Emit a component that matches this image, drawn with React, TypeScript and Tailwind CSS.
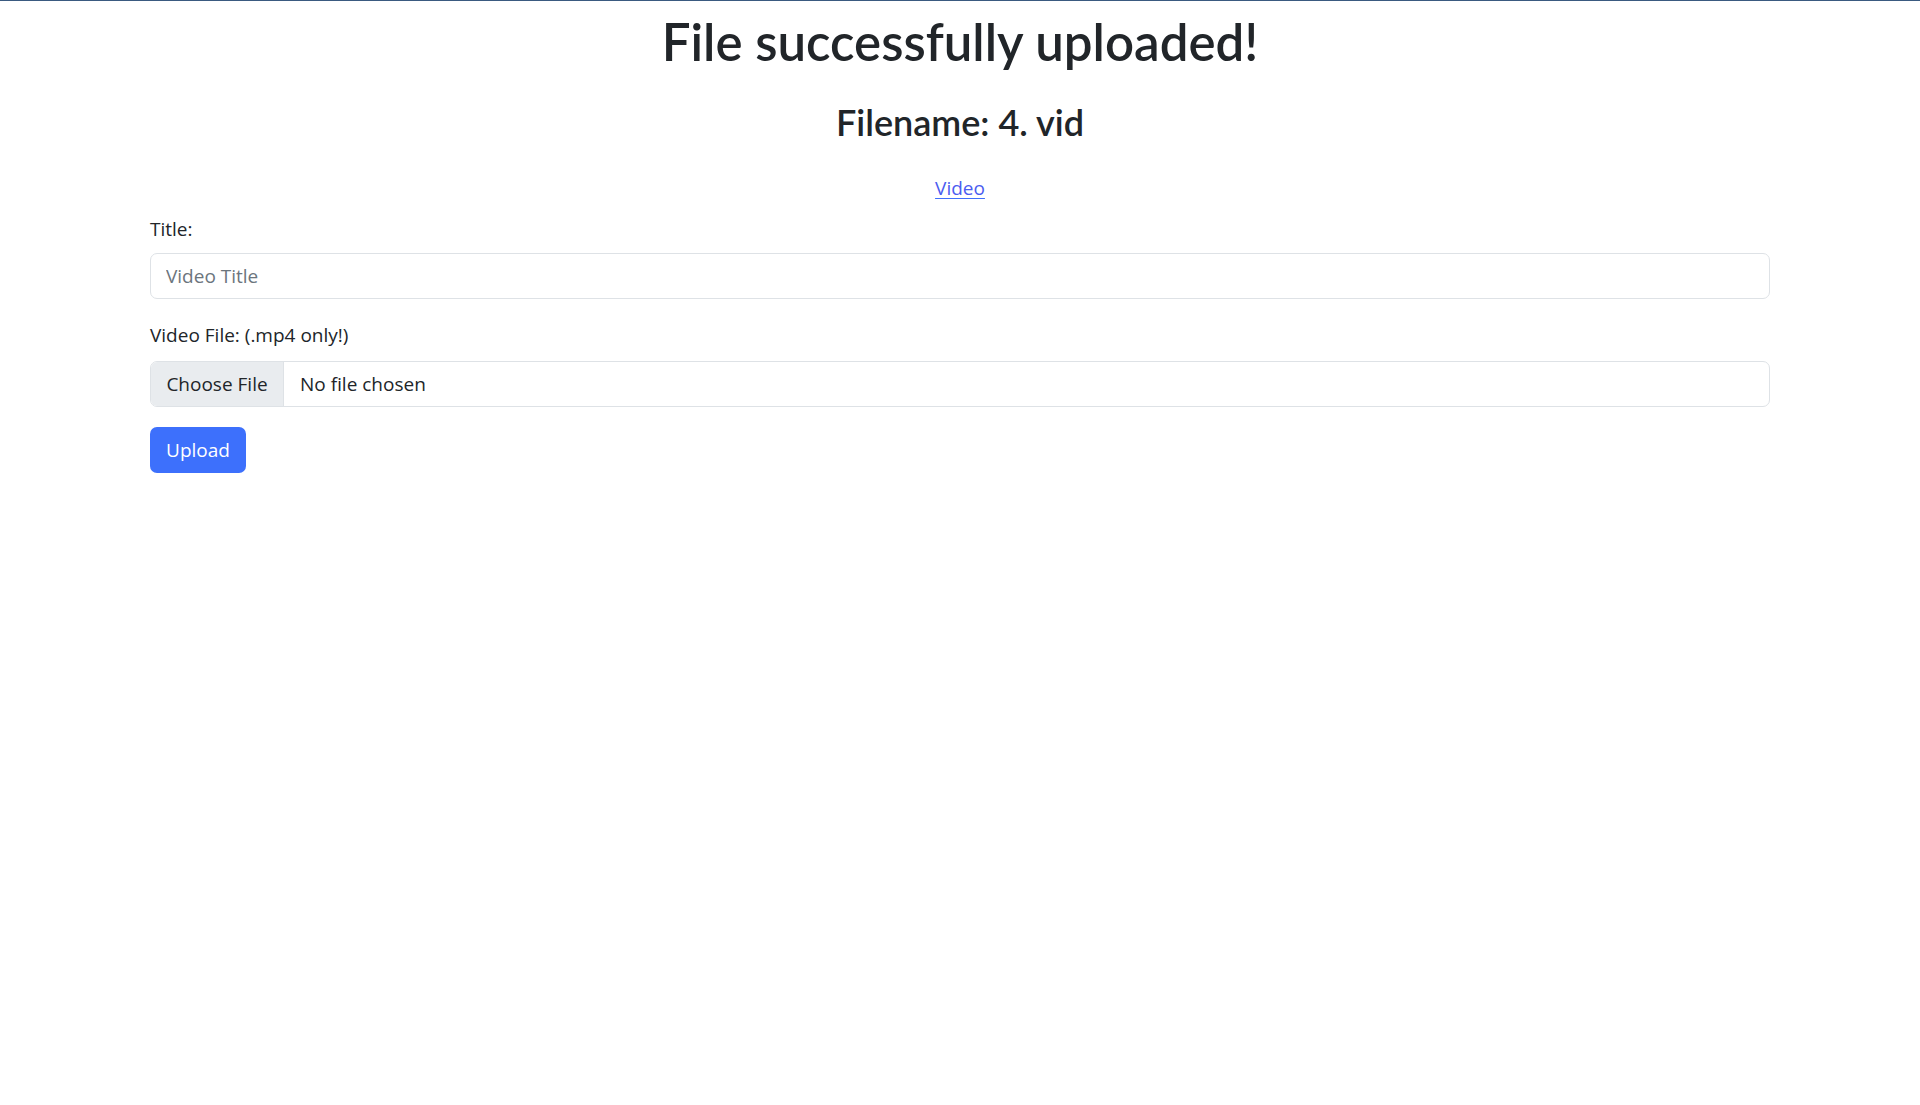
export default function App() {
  return (
    <div className="min-h-screen bg-white border-t border-[#3a5a80] font-['Open_Sans',sans-serif] text-[#212529]">
      <div className="mx-auto w-[1650px] px-[15px] pt-[11px]">
        <h1 className="text-center font-['Lato',sans-serif] text-[51px] leading-[60px] font-semibold">
          File successfully uploaded!
        </h1>
        <h2 className="text-center font-['Lato',sans-serif] text-[36px] leading-[44px] font-semibold mt-[28px]">
          Filename: 4. vid
        </h2>
        <div className="text-center text-[19px] leading-[30px] mt-[29px]">
          <a href="#" className="text-[#4b5cf0] underline decoration-[#3f6ffb] underline-offset-[3px]">
            Video
          </a>
        </div>
        <form className="mt-[11px]">
          <label className="block text-[19px] leading-[30px] mb-[9px]">Title:</label>
          <input
            type="text"
            placeholder="Video Title"
            className="block w-full h-[46px] px-[15px] text-[19px] border border-[#dee2e6] rounded-[7px] placeholder:text-[#6c757d] outline-none"
          />
          <label className="block text-[19px] leading-[30px] mt-[21px] mb-[11px]">Video File: (.mp4 only!)</label>
          <div className="flex w-full h-[46px] border border-[#dee2e6] rounded-[7px] overflow-hidden text-[19px]">
            <span className="flex items-center w-[133px] justify-center bg-[#e9ecef] border-r border-[#dee2e6]">Choose File</span>
            <span className="flex items-center px-[16px]">No file chosen</span>
          </div>
          <button
            type="button"
            className="block mt-[20px] h-[46px] w-[96px] rounded-[7px] bg-[#3d70fc] text-white text-[19px]"
          >
            Upload
          </button>
        </form>
      </div>
    </div>
  );
}
